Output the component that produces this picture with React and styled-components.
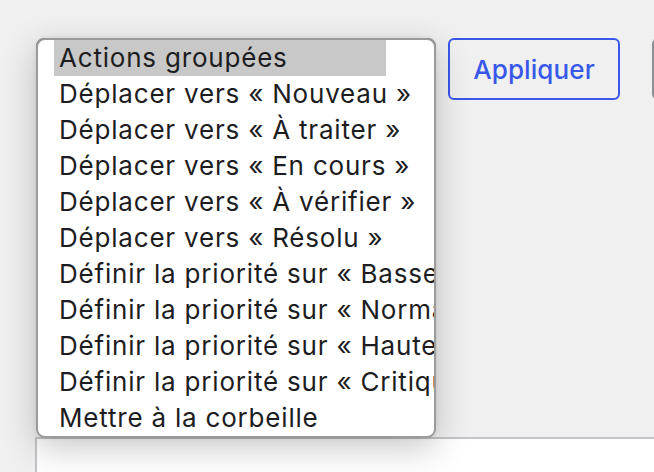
import styled, { createGlobalStyle } from "styled-components";

const GlobalStyle = createGlobalStyle`
  html, body {
    margin: 0;
    padding: 0;
    background: #f0f0f1;
    font-family: Inter, "Liberation Sans", Arial, sans-serif;
    color: #1d1d1f;
  }
`;

const StyledPage = styled.div`
  height: 472px;
  overflow: hidden;
  padding: 38px 0 0 35px;
  box-sizing: border-box;
`;

const StyledToolbar = styled.div`
  display: flex;
  align-items: flex-start;
  gap: 12px;
  padding-left: 1px;
`;

const StyledSelectWrap = styled.div`
  position: relative;
  width: 400px;
  height: 62px;
  flex-shrink: 0;
`;

const StyledClosedSelect = styled.div`
  height: 62px;
  border: 2px solid #8c8f94;
  border-radius: 8px;
  background: #fff;
  box-sizing: border-box;
`;

const StyledListbox = styled.ul`
  position: absolute;
  top: 0;
  left: 0;
  z-index: 2;
  width: 400px;
  margin: 0;
  padding: 0;
  list-style: none;
  background: #fff;
  border: 2px solid #9a9a9a;
  border-radius: 9px;
  box-sizing: border-box;
  overflow: hidden;
  box-shadow: 0 10px 34px rgba(0, 0, 0, 0.22), 0 0 4px rgba(0, 0, 0, 0.08);
`;

const StyledOption = styled.li`
  height: 36px;
  line-height: 36px;
  margin-left: 16px;
  padding-left: 5px;
  width: ${(p) => (p.$selected ? "327px" : "auto")};
  background: ${(p) => (p.$selected ? "#c8c8c8" : "transparent")};
  white-space: nowrap;
  font-size: 26px;
  letter-spacing: 0.8px;
`;

const StyledButton = styled.button`
  height: 62px;
  width: ${(p) => p.$width};
  padding: 0;
  border: 2px solid ${(p) => (p.$secondary ? "#8c8f94" : "#3858e9")};
  border-radius: 6px;
  background: transparent;
  color: #3858e9;
  font-family: inherit;
  font-size: 26px;
  font-weight: 500;
  letter-spacing: 0.1px;
  cursor: pointer;
  white-space: nowrap;
  flex-shrink: 0;
`;

const StyledSpacer = styled.div`
  width: 8px;
  flex-shrink: 0;
`;

const StyledTable = styled.div`
  margin-top: 337px;
  width: 700px;
  height: 80px;
  background: #fff;
  border: 2px solid #c3c4c7;
  box-sizing: border-box;
`;

const actions = [
  "Actions groupées",
  "Déplacer vers « Nouveau »",
  "Déplacer vers « À traiter »",
  "Déplacer vers « En cours »",
  "Déplacer vers « À vérifier »",
  "Déplacer vers « Résolu »",
  "Définir la priorité sur « Basse »",
  "Définir la priorité sur « Normale »",
  "Définir la priorité sur « Haute »",
  "Définir la priorité sur « Critique »",
  "Mettre à la corbeille",
];

export default function App() {
  return (
    <>
      <GlobalStyle />
      <StyledPage>
        <StyledToolbar>
          <StyledSelectWrap>
            <StyledClosedSelect />
            <StyledListbox role="listbox">
              {actions.map((label, i) => (
                <StyledOption key={label} $selected={i === 0}>
                  {label}
                </StyledOption>
              ))}
            </StyledListbox>
          </StyledSelectWrap>
          <StyledButton $width="172px">Appliquer</StyledButton>
          <StyledSpacer />
          <StyledButton $secondary $width="140px">Filtrer</StyledButton>
        </StyledToolbar>
        <StyledTable />
      </StyledPage>
    </>
  );
}
